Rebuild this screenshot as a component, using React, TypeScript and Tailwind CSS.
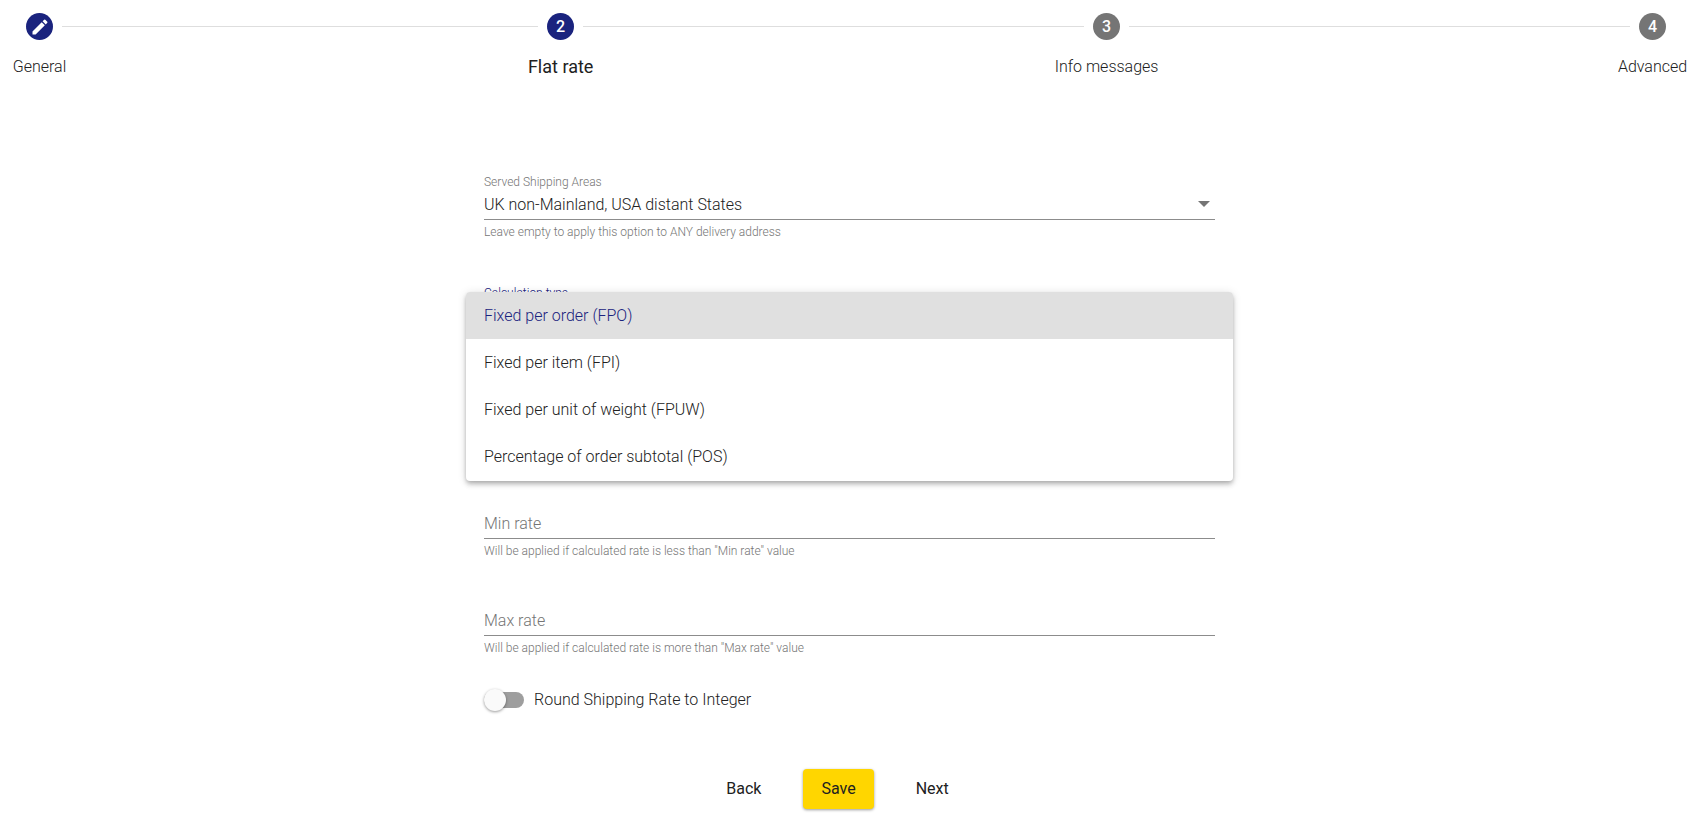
import { useState } from 'react';
import { clsx } from 'clsx';

type StepState = 'done' | 'active' | 'pending';

interface Step {
  label: string;
  state: StepState;
  // Width share of the connector that leads to this step
  connector?: string;
}

const STEPS: readonly Step[] = [
  { label: 'General', state: 'done' },
  { label: 'Flat rate', state: 'active', connector: 'flex-21' },
  { label: 'Info messages', state: 'pending', connector: 'flex-22' },
  { label: 'Advanced', state: 'pending', connector: 'flex-22' },
];

const CALCULATION_TYPES = [
  'Fixed per order (FPO)',
  'Fixed per item (FPI)',
  'Fixed per unit of weight (FPUW)',
  'Percentage of order subtotal (POS)',
] as const;

const CONTROL =
  'block h-[30px] w-full appearance-none rounded-none border-b border-[#8c8c8c] bg-transparent text-base outline-none';

function PencilIcon() {
  return (
    <svg viewBox="0 0 24 24" className="size-5 fill-white" aria-hidden="true">
      <path d="M3 17.25V21h3.75L17.81 9.94l-3.75-3.75L3 17.25zM20.71 7.04a1 1 0 0 0 0-1.41l-2.34-2.34a1 1 0 0 0-1.41 0l-1.83 1.83 3.75 3.75 1.83-1.83z" />
    </svg>
  );
}

function Stepper() {
  return (
    <nav aria-label="Steps" className="flex items-start pt-[13px] pr-[21px] pl-[14px]">
      {STEPS.map((step, index) => (
        <div key={step.label} className={clsx('flex', step.connector)}>
          {step.connector && <span className="mx-[9px] mt-[13px] h-px flex-1 bg-[#dedede]" />}
          <button
            type="button"
            aria-current={step.state === 'active' ? 'step' : undefined}
            className="flex w-[27px] flex-col items-center gap-[15px]"
          >
            <span
              className={clsx(
                'flex size-[27px] shrink-0 items-center justify-center rounded-full text-base font-medium text-white',
                step.state === 'pending' ? 'bg-[#757575]' : 'bg-[#1a237e]',
              )}
            >
              {step.state === 'done' ? <PencilIcon /> : index + 1}
            </span>
            <span
              className={clsx(
                'leading-6 whitespace-nowrap',
                step.state === 'active' ? 'text-lg font-normal' : 'text-base font-light',
              )}
            >
              {step.label}
            </span>
          </button>
        </div>
      ))}
    </nav>
  );
}

interface RateFieldProps {
  id: string;
  label: string;
  hint: string;
}

/** Text box whose label rests on the line and floats up once it is in use. */
function RateField({ id, label, hint }: RateFieldProps) {
  return (
    <div>
      <div className="relative">
        <input id={id} type="text" placeholder=" " className={clsx('peer', CONTROL)} />
        <label
          htmlFor={id}
          className="pointer-events-none absolute -top-4 left-0 text-xs text-[#757575] peer-placeholder-shown:top-[3px] peer-placeholder-shown:text-base peer-focus:-top-4 peer-focus:text-xs"
        >
          {label}
        </label>
      </div>
      <p className="mt-1 text-xs text-[#757575]">{hint}</p>
    </div>
  );
}

export default function App() {
  const [calculationType, setCalculationType] = useState<string>(CALCULATION_TYPES[0]);
  const [roundRate, setRoundRate] = useState(false);

  return (
    <div className="bg-white pr-[17px] pl-3 font-['Roboto',sans-serif] font-light text-[#212121]">
      <Stepper />

      <form
        className="mx-auto mt-[95px] w-[44%] px-[3px]"
        onSubmit={(event) => event.preventDefault()}
      >
        {/* Shipping areas */}
        <div>
          <label htmlFor="areas" className="block text-xs text-[#757575]">
            Served Shipping Areas
          </label>
          <div className="relative">
            <select id="areas" className={CONTROL}>
              <option>UK non-Mainland, USA distant States</option>
            </select>
            <svg
              viewBox="0 0 12 6"
              className="pointer-events-none absolute top-[11px] right-[5px] h-[6px] w-3 fill-[#757575]"
              aria-hidden="true"
            >
              <path d="M0 0h12L6 6z" />
            </svg>
          </div>
          <p className="mt-1 text-xs text-[#757575]">
            Leave empty to apply this option to ANY delivery address
          </p>
        </div>

        {/* Calculation type, with its menu open */}
        <div className="relative mt-[45px] h-[224px]">
          <span id="calculation-label" className="block text-xs text-[#1a237e]">
            Calculation type
          </span>
          <ul
            role="listbox"
            aria-labelledby="calculation-label"
            className="absolute top-[7px] -right-[18px] -left-[18px] overflow-hidden rounded-[4px] bg-white pb-px shadow-[0_2px_4px_-1px_rgba(0,0,0,0.2),0_4px_5px_rgba(0,0,0,0.14),0_1px_10px_rgba(0,0,0,0.12)]"
          >
            {CALCULATION_TYPES.map((type) => (
              <li key={type} role="option" aria-selected={type === calculationType}>
                <button
                  type="button"
                  onClick={() => setCalculationType(type)}
                  className={clsx(
                    'block h-[47px] w-full px-[18px] text-left text-base',
                    type === calculationType && 'bg-[#e0e0e0] text-[#1a237e]',
                  )}
                >
                  {type}
                </button>
              </li>
            ))}
          </ul>
        </div>

        {/* Rate limits */}
        <div className="space-y-[47px]">
          <RateField
            id="min-rate"
            label="Min rate"
            hint={'Will be applied if calculated rate is less than "Min rate" value'}
          />
          <RateField
            id="max-rate"
            label="Max rate"
            hint={'Will be applied if calculated rate is more than "Max rate" value'}
          />
        </div>

        {/* Rounding */}
        <label className="mt-8 flex items-center gap-[10px]">
          <span className="relative flex h-6 w-10 items-center">
            <input
              type="checkbox"
              role="switch"
              checked={roundRate}
              onChange={(event) => setRoundRate(event.target.checked)}
              className="peer h-4 w-10 appearance-none rounded-full bg-[#9e9e9e] checked:bg-[#1a237e]/50"
            />
            <span className="pointer-events-none absolute top-[1px] left-0 size-[22px] rounded-full bg-[#fafafa] shadow-[0_1px_3px_rgba(0,0,0,0.4)] peer-checked:left-[18px] peer-checked:bg-[#1a237e]" />
          </span>
          Round Shipping Rate to Integer
        </label>
      </form>

      {/* Actions */}
      <div className="mt-[57px] flex justify-center gap-6 pr-6 pb-[13px]">
        <button type="button" className="h-10 rounded-[4px] px-[18px] text-base font-normal">
          Back
        </button>
        <button
          type="button"
          className="h-10 rounded-[4px] bg-[#ffd600] px-[18px] text-base font-normal shadow-[0_1px_3px_rgba(0,0,0,0.4)]"
        >
          Save
        </button>
        <button type="button" className="h-10 rounded-[4px] px-[18px] text-base font-normal">
          Next
        </button>
      </div>
    </div>
  );
}
